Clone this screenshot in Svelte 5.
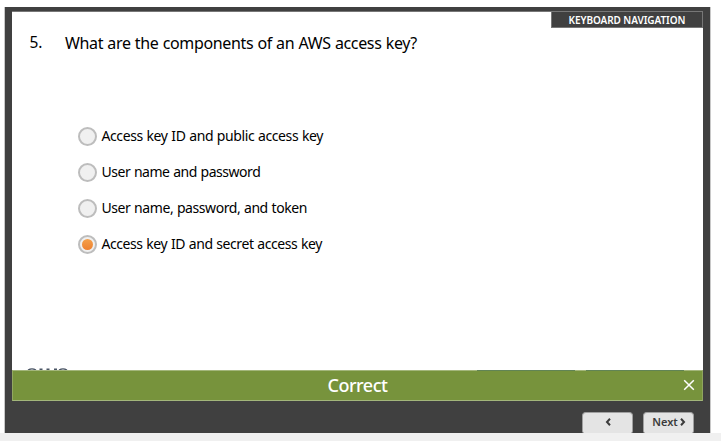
<script>
  const options = [
    { text: 'Access key ID and public access key', spacing: -0.4 },
    { text: 'User name and password', spacing: -0.47 },
    { text: 'User name, password, and token', spacing: -0.43 },
    { text: 'Access key ID and secret access key', spacing: -0.43 }
  ];
  let selected = $state(3);
</script>

<div class="page">
  <main class="player">
    <section class="slide">
      <button class="keyboard"><span>KEYBOARD NAVIGATION</span></button>
      <div class="question">
        <span class="number">5.</span>
        <span class="prompt">What are the components of an AWS access key?</span>
      </div>
      <div class="options" role="radiogroup">
        {#each options as option, i}
          <button class="option" role="radio" aria-checked={selected === i} onclick={() => (selected = i)}>
            <span class="radio">{#if selected === i}<span class="dot"></span>{/if}</span>
            <span class="label" style="letter-spacing: {option.spacing}px">{option.text}</span>
          </button>
        {/each}
      </div>
      <svg class="logo" width="42" height="2" viewBox="0 0 42 2" aria-hidden="true">
        <path d="M1 2Q5 -.2 9 2M12.5 1.3h3M19.5 1.3h3M27 1.3h3M32 2Q36 -.2 40 2" fill="none" stroke="#4a5565" stroke-width="1.4" />
      </svg>
    </section>
    <section class="feedback">
      <div class="edge"><i class="first"></i><i class="second"></i></div>
      <span class="result">Correct</span>
      <button class="close" aria-label="Close">
        <svg width="12" height="12" viewBox="0 0 12 12"><path d="M1.2 1.2l9.6 9.6M10.8 1.2l-9.6 9.6" stroke="#fff" stroke-width="1.5" /></svg>
      </button>
    </section>
    <nav class="controls">
      <button class="nav" aria-label="Previous">
        <svg width="6" height="8" viewBox="0 0 6 8"><path d="M5 .8L2 4l3 3.2" fill="none" stroke="#3b3b3b" stroke-width="2" /></svg>
      </button>
      <button class="nav next">
        <span>Next</span>
        <svg width="6" height="8" viewBox="0 0 6 8"><path d="M1 .8L4 4 1 7.2" fill="none" stroke="#3b3b3b" stroke-width="2" /></svg>
      </button>
    </nav>
  </main>
  <div class="strip"></div>
</div>

<style>
  :global(body) { margin: 0; background: #fff; }
  * { box-sizing: border-box; }
  button { border: 0; margin: 0; padding: 0; background: none; font: inherit; color: inherit; }
  svg { display: block; flex: none; }
  .page {
    width: 721px;
    height: 441px;
    padding-top: 7px;
    display: flex;
    flex-direction: column;
    overflow: hidden;
    font-family: 'Noto Sans', sans-serif;
    color: #000;
    white-space: nowrap;
  }
  .player {
    width: 707px;
    height: 426px;
    margin-left: 4px;
    padding: 4px 7px 0;
    background: #404040;
    border-left: 1px solid #c8c8c8;
    border-right: 1px solid #c8c8c8;
    display: flex;
    flex-direction: column;
    flex: none;
  }
  .slide {
    height: 359px;
    flex: none;
    display: flex;
    flex-direction: column;
    background: #fff;
    border-top: 1px solid #777;
  }
  .keyboard {
    width: 152px;
    height: 16px;
    align-self: flex-end;
    background: #404040;
    border: 1px solid #777;
    border-top: 0;
    color: #fff;
    font-size: 10px;
    font-weight: 600;
    line-height: 16px;
    letter-spacing: -0.07px;
  }
  .keyboard span { display: block; height: 16px; }
  .question {
    display: flex;
    height: 24px;
    margin: 3px 0 0 17.5px;
    font-size: 16px;
    line-height: 24px;
  }
  .number { width: 35.5px; font-size: 15.5px; line-height: 23px; }
  .prompt { letter-spacing: -0.35px; word-spacing: 0.4px; }
  .options { display: flex; flex-direction: column; margin: 63px 0 0 66px; }
  .option { height: 36px; display: flex; align-items: center; gap: 4.5px; font-size: 14px; }
  .radio {
    width: 19px;
    height: 19px;
    margin-top: 1px;
    flex: none;
    border: 2px solid #bdbdbd;
    border-radius: 50%;
    background: #f0f0f0;
    display: flex;
    align-items: center;
    justify-content: center;
  }
  .dot { width: 11px; height: 11px; border-radius: 50%; background: linear-gradient(#f4a04b, #ee8130); }
  .label { line-height: 20px; word-spacing: 0.5px; }
  .logo { margin: auto 0 0 15px; }
  .feedback {
    width: 691px;
    height: 31px;
    flex: none;
    display: flex;
    align-items: center;
    justify-content: center;
    position: relative;
    background: #77933c;
    border: 1px solid #a3b67b;
    border-right-color: #8fa55f;
    border-left-color: #92a861;
    color: #fff;
  }
  .edge { position: absolute; top: -1px; left: 464px; right: 18px; height: 1px; display: flex; gap: 11px; }
  .edge i { height: 1px; background: #618455; }
  .first { width: 98px; }
  .second { flex: 1; }
  .result { font-size: 18px; font-weight: 500; line-height: 24px; letter-spacing: -0.5px; padding-bottom: 2px; }
  .close { position: absolute; right: 7px; top: 8px; }
  .controls { height: 32px; display: flex; align-items: flex-end; justify-content: flex-end; gap: 10px; padding-right: 9px; }
  .nav {
    width: 51px;
    height: 21px;
    display: flex;
    align-items: center;
    justify-content: center;
    gap: 2px;
    padding: 0 0 2px 1px;
    background: #e4e4e4;
    border: 1px solid #a0a0a0;
    border-bottom: 0;
    border-radius: 4px 4px 2px 2px;
    color: #3b3b3b;
    font-size: 11px;
    font-weight: 600;
    line-height: 16px;
  }
  .strip { height: 8px; background: #f0f0f0; }
</style>
